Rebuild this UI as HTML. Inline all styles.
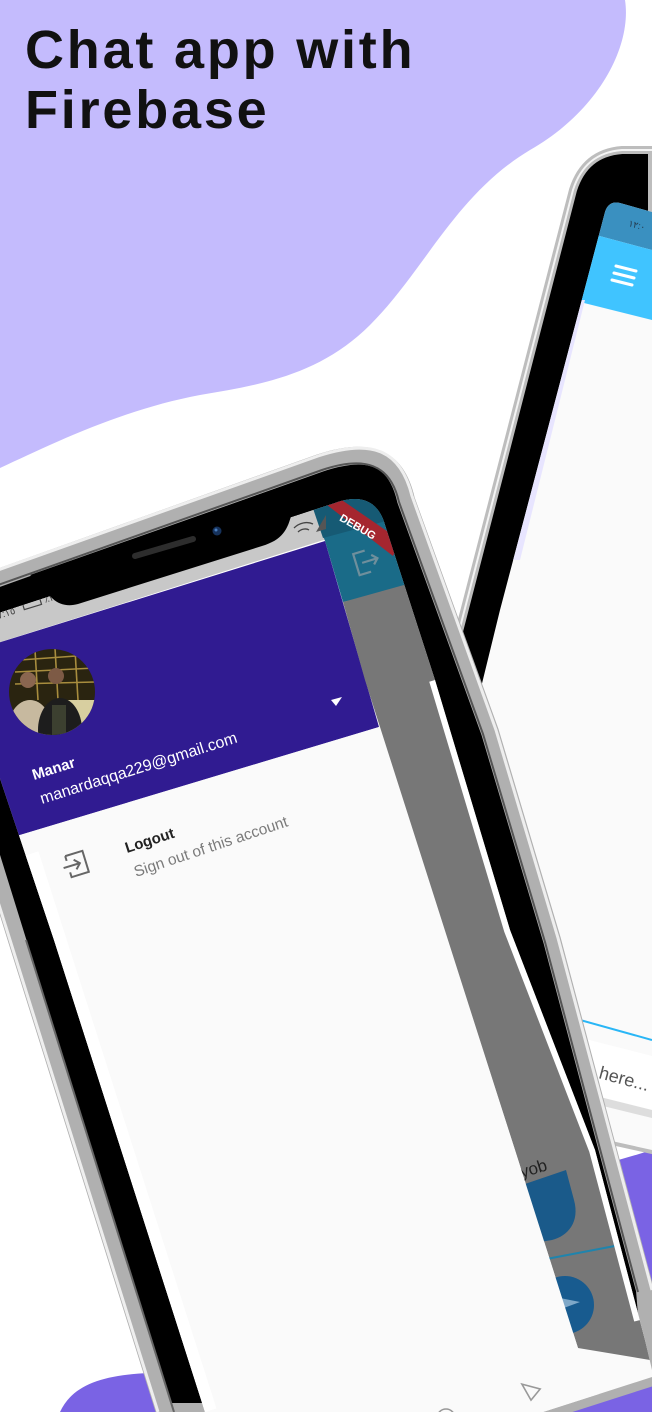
<!DOCTYPE html>
<html><head><meta charset="utf-8"><style>
html,body{margin:0;padding:0;background:#fff}
body{width:652px;height:1412px;overflow:hidden;position:relative}
svg{position:absolute;left:0;top:0}
.t{font-family:"Liberation Sans",sans-serif}
</style></head><body>
<svg width="652" height="1412" viewBox="0 0 652 1412" xmlns="http://www.w3.org/2000/svg">
<defs>
<clipPath id="fs"><path d="M-50,629 L335,503 C360,494 378,500 385,525 L435,680 L510,930 L595,1150 L645,1340 L652,1370 L652,1377 L543,1412 L205,1412 L54,940 Z"/></clipPath>
<clipPath id="bs"><path d="M652,212 L620,203 C612,201 607,205 605,212 L500,610 L380,1100 L540,1125 L652,1150 Z"/></clipPath>
<clipPath id="av"><circle cx="52" cy="692" r="43"/></clipPath>
</defs>

<path d="M0,0 L625,0 C632,45 600,110 530,150 C455,195 425,270 370,325 C320,375 260,385 200,395 C120,410 50,445 0,468 Z" fill="#c4bbfd"/>
<path d="M60,1412 C72,1386 100,1375 150,1373 L250,1372 L250,1412 Z" fill="#7a63e4"/>
<path d="M548,1190 C565,1172 605,1165 652,1150 L652,1412 L530,1412 Z" fill="#7a63e4"/>
<path d="M438,700 L492,606 L512,640 L470,760 Z" fill="#c8c0fd"/>

<!-- back phone -->
<path d="M652,150 L622,150 C597,152 581,165 573,190 L440,705 L380,1100 L540,1125 L652,1150 Z" fill="#000" stroke="#bdbdbd" stroke-width="8"/>
<path d="M652,150 L622,150 C597,152 581,165 573,190 L440,705" fill="none" stroke="#f4f4f4" stroke-width="2"/>
<g clip-path="url(#bs)">
<rect x="350" y="150" width="310" height="1000" fill="#fafafa"/>
<polygon points="600,195 652,208 652,250 592,234" fill="#3a90c0"/>
<polygon points="592,234 652,250 652,320 572,300" fill="#40c4ff"/>
<polygon points="572,300 585,300 520,560 505,560" fill="#e8e5ff"/>
<text x="628" y="226" class="t" font-size="9" fill="#234" transform="rotate(15 628 226)">١٢:٠</text>
<g stroke="#fff" stroke-width="3" stroke-linecap="round">
<line x1="616" y1="266" x2="636" y2="271"/><line x1="614" y1="273" x2="634" y2="278"/><line x1="612" y1="280" x2="632" y2="285"/></g>
<line x1="555" y1="1013" x2="652" y2="1040" stroke="#29b6f6" stroke-width="2"/>
<polygon points="550,1030 652,1056 652,1110 540,1082" fill="#fff"/>
<polygon points="540,1082 652,1110 652,1118 538,1090" fill="#ddd"/>
<text x="598" y="1078" class="t" font-size="18" fill="#555" transform="rotate(15 598 1078)">here...</text>
<text x="558" y="1060" class="t" font-size="18" fill="#555" transform="rotate(15 558 1060)">s</text>
</g>

<!-- front phone body -->
<path d="M-86,608 L320,463 C368,447 396,456 406,500 L490,732 L552,940 L645,1290 L652,1377 L543,1412 L165,1412 L17,940 Z" fill="#000" stroke="#b0b0b0" stroke-width="18"/>
<path d="M-92,602 L318,456 C370,439 400,448 412,496 L496,730 L558,938 L652,1290" fill="none" stroke="#eee" stroke-width="3"/>
<path d="M-78,612 L322,470 C364,456 390,463 399,502 L483,734 L545,942 L638,1292" fill="none" stroke="#555" stroke-width="2"/>
<path d="M158,1412 L10,940 L-95,605" fill="none" stroke="#eee" stroke-width="3"/>
<path d="M174,1412 L26,940" fill="none" stroke="#666" stroke-width="2"/>

<!-- front screen -->
<g clip-path="url(#fs)">
<rect x="-60" y="440" width="720" height="1000" fill="#fafafa"/>
<polygon points="-60,610 340,478 345,540 -60,670" fill="#fff"/>
<polygon points="-60,624 330,497 330,538 -60,661" fill="#c8c8c8"/>
<polygon points="300,470 440,440 440,580 343,602 325,541 312,505" fill="#1a6b88"/>
<polygon points="300,470 440,430 420,512 323,538" fill="#165a74"/>
<polygon points="318,498 336,496 400,540 393,556" fill="#a5262f"/>
<text x="356" y="530" class="t" font-size="11" font-weight="bold" fill="#fff" text-anchor="middle" transform="rotate(30 356 530)">DEBUG</text>
<g fill="none" stroke="#6f8f9c" stroke-width="2.2" transform="rotate(-17 365 562)">
<path d="M368,551 L356,551 L356,573 L368,573"/><path d="M362,562 L378,562 M373,557 L378,562 L373,567"/></g>
<polygon points="-60,661 325,541 379,727 -60,859" fill="#301b91"/>
<polygon points="343,602 440,575 435,680 510,930 595,1150 645,1340 650,1360 578,1348 515,1150 365,680" fill="#777"/>
<path d="M522,1185 L566,1170 L574,1200 C580,1222 568,1236 552,1240 L540,1242 Z" fill="#1a5a8a"/>
<text x="522" y="1178" class="t" font-size="17" fill="#222" transform="rotate(-17 522 1178)">yob</text>
<line x1="515" y1="1265" x2="620" y2="1245" stroke="#1f84ad" stroke-width="2"/>
<circle cx="565" cy="1305" r="29" fill="#185b8f"/>
<path d="M553,1312 L580,1302 L560,1298 Z" fill="#7fa8c8"/>
<polygon points="-60,859 379,727 515,1150 578,1348 610,1420 -60,1420" fill="#fafafa"/>
<path d="M435,680 L510,930 L595,1150 L640,1320" fill="none" stroke="#fff" stroke-width="12"/>
<path d="M205,1412 L27,855" fill="none" stroke="#fff" stroke-width="24"/>
<path d="M524,1382 L540,1392 L528,1400 Z" fill="none" stroke="#999" stroke-width="1.6" transform="rotate(-17 530 1390)"/>
<circle cx="446" cy="1418" r="9" fill="none" stroke="#999" stroke-width="1.6"/>
<g clip-path="url(#av)">
<rect x="0" y="640" width="110" height="110" fill="#2a2410"/>
<g stroke="#c8a84a" stroke-width="1.6" opacity=".8">
<line x1="20" y1="660" x2="90" y2="655"/><line x1="15" y1="672" x2="95" y2="668"/><line x1="15" y1="684" x2="95" y2="682"/>
<line x1="35" y1="650" x2="38" y2="700"/><line x1="55" y1="648" x2="58" y2="700"/><line x1="75" y1="650" x2="78" y2="700"/></g>
<rect x="60" y="700" width="40" height="40" fill="#d8cfa0"/>
<ellipse cx="30" cy="730" rx="22" ry="30" fill="#c7b99f"/>
<circle cx="28" cy="680" r="8" fill="#8a6650"/>
<ellipse cx="60" cy="730" rx="22" ry="32" fill="#1d1d1d"/>
<rect x="52" y="705" width="14" height="30" fill="#3c4030"/>
<circle cx="56" cy="676" r="8" fill="#7d5a45"/>
</g>
<path d="M331,700 L342,697 L336,706 Z" fill="#fff"/>
<text x="34" y="780" class="t" font-size="15" font-weight="bold" fill="#fff" transform="rotate(-17.5 34 780)">Manar</text>
<text x="42" y="804" class="t" font-size="16" fill="#fff" transform="rotate(-17.5 42 804)">manardaqqa229@gmail.com</text>
<text x="-2" y="619" class="t" font-size="10" fill="#444" transform="rotate(-17 -2 619)">٧:١٥</text>
<rect x="22" y="602" width="18" height="8" fill="none" stroke="#444" stroke-width="1.2" transform="rotate(-17 22 602)"/>
<text x="45" y="603" class="t" font-size="10" fill="#444" transform="rotate(-17 45 603)">٪٣١</text>
<g fill="none" stroke="#444" stroke-width="1.3">
<path d="M294,528 C299,523 307,521 313,524" /><path d="M298,532 C301,529 306,528 309,530"/></g>
<path d="M316,532 L326,515 L326,529 Z" fill="#555"/>
<g fill="none" stroke="#666" stroke-width="2" transform="rotate(-17 77 864)">
<path d="M68,853 L86,853 L86,875 L68,875 L68,870"/><path d="M68,858 L68,853"/><path d="M63,864 L80,864 M75,859 L80,864 L75,869"/></g>
<text x="127" y="853" class="t" font-size="15" font-weight="bold" fill="#222" transform="rotate(-18 127 853)">Logout</text>
<text x="136" y="877" class="t" font-size="15.5" fill="#7a7a7a" transform="rotate(-18.5 136 877)">Sign out of this account</text>
</g>

<path d="M30,575 L300,480 L292,512 C288,530 282,540 262,546 L78,604 C60,609 48,598 43,583 Z" fill="#000"/>
<line x1="135" y1="556" x2="193" y2="539" stroke="#2d2d2d" stroke-width="6" stroke-linecap="round"/>
<circle cx="217" cy="531" r="4.5" fill="#16325c"/>
<circle cx="216" cy="530" r="1.5" fill="#4a7fc0"/>

<text x="25" y="68" class="t" font-size="54" font-weight="bold" letter-spacing="2.8" fill="#111">Chat app with</text>
<text x="25" y="128" class="t" font-size="54" font-weight="bold" letter-spacing="2.8" fill="#111">Firebase</text>
</svg>
</body></html>
